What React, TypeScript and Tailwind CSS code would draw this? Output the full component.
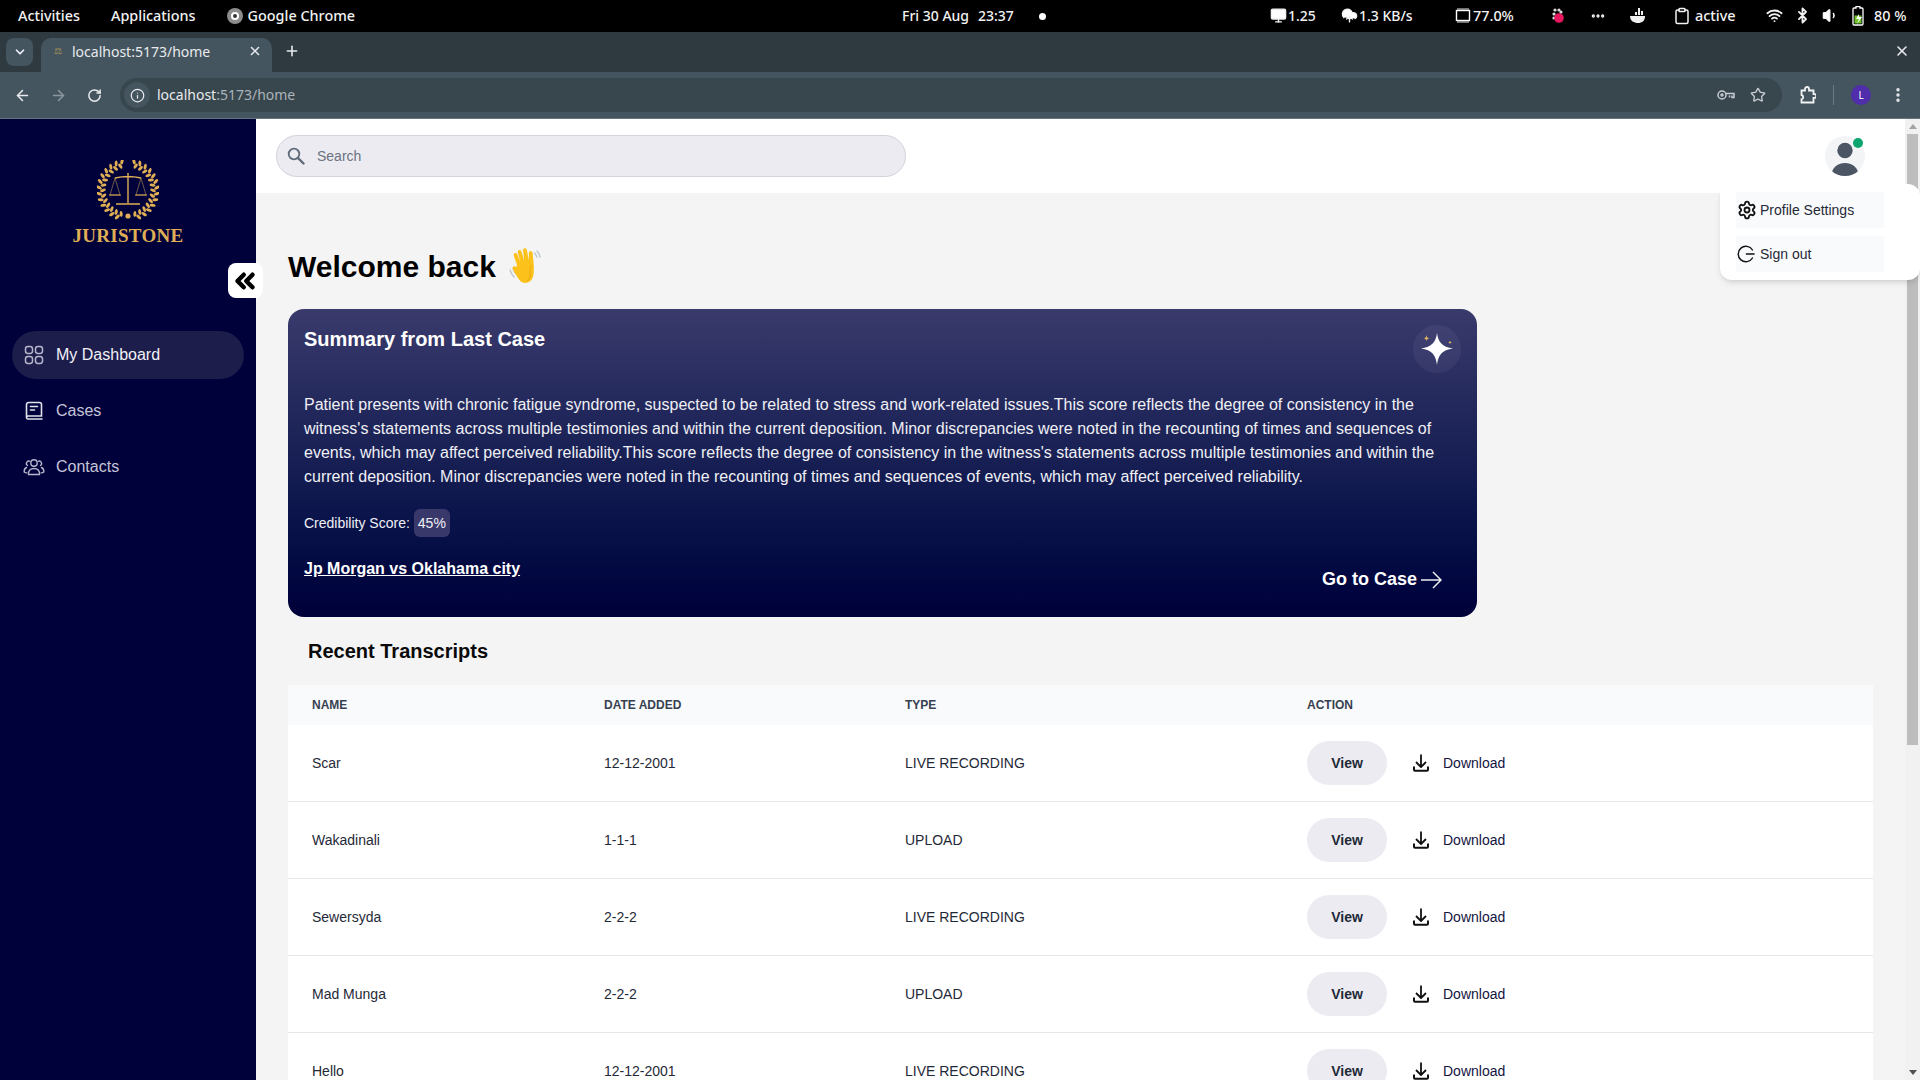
import {
  ArrowLeft, ArrowRight, Bluetooth, ChevronDown, ChevronsLeft, Ellipsis, Info, Monitor,
  MoreVertical, Plus, RotateCw, Settings, Star, Volume1, Wifi, X, CloudUpload, Clipboard,
} from "lucide-react";

const ROWS = [
  { name: "Scar", date: "12-12-2001", type: "LIVE RECORDING" },
  { name: "Wakadinali", date: "1-1-1", type: "UPLOAD" },
  { name: "Sewersyda", date: "2-2-2", type: "LIVE RECORDING" },
  { name: "Mad Munga", date: "2-2-2", type: "UPLOAD" },
  { name: "Hello", date: "12-12-2001", type: "LIVE RECORDING" },
];

const SUMMARY =
  "Patient presents with chronic fatigue syndrome, suspected to be related to stress and work-related issues.This score reflects the degree of consistency in the witness's statements across multiple testimonies and within the current deposition. Minor discrepancies were noted in the recounting of times and sequences of events, which may affect perceived reliability.This score reflects the degree of consistency in the witness's statements across multiple testimonies and within the current deposition. Minor discrepancies were noted in the recounting of times and sequences of events, which may affect perceived reliability.";

function Wreath() {
  const leaves = [];
  for (let i = 0; i < 13; i++) {
    const deg = 12 + i * 12.2;
    const rad = (deg * Math.PI) / 180;
    for (const side of [1, -1]) {
      const x = 31 + side * 25 * Math.sin(rad + 0.1);
      const y = 30 - 25 * Math.cos(rad + 0.1);
      const x2 = 31 + side * 29 * Math.sin(rad);
      const y2 = 30 - 29 * Math.cos(rad);
      leaves.push(
        <ellipse key={`${i}${side}a`} cx={x} cy={y} rx="1.5" ry="3" fill="#dfae55" transform={`rotate(${side * (deg + 25)} ${x} ${y})`} />,
        <ellipse key={`${i}${side}b`} cx={x2} cy={y2} rx="1.5" ry="3" fill="#dfae55" transform={`rotate(${side * (deg - 25)} ${x2} ${y2})`} />,
      );
    }
  }
  return (
    <svg width="62" height="60" viewBox="0 0 62 60" fill="none">
      {leaves}
      <path d="M31 13v30M19 44h24M18 18q13-3 26 0" stroke="#dfae55" strokeWidth="1.4" />
      <path d="M18 18l-5 17h10zM44 18l-5 17h10z" stroke="#dfae55" strokeWidth=".5" />
      <path d="M12 35h12M38 35h12" stroke="#dfae55" strokeWidth="1" />
      <circle cx="31" cy="56" r="2.6" fill="#dfae55" />
    </svg>
  );
}

function GridIcon() {
  return (
    <svg width="20" height="20" viewBox="0 0 20 20" fill="none" stroke="#b5b5cb" strokeWidth="1.5">
      <rect x="1.5" y="1.5" width="7" height="7" rx="2.4" />
      <rect x="11.5" y="1.5" width="7" height="7" rx="2.4" />
      <rect x="1.5" y="11.5" width="7" height="7" rx="2.4" />
      <rect x="11.5" y="11.5" width="7" height="7" rx="2.4" />
    </svg>
  );
}

function BookIcon() {
  return (
    <svg width="20" height="20" viewBox="0 0 20 20" fill="none" stroke="#e2e2ec" strokeWidth="1.6" strokeLinecap="round">
      <path d="M2.500 16V3.500a2 2 0 0 1 2-2h11a2 2 0 0 1 2 2v11.500H4.500a1.700 1.700 0 0 0-2 1.700 1.500 1.500 0 0 0 1.500 1.300h14" />
      <path d="M6.500 5.500h7M6.500 9h4" />
    </svg>
  );
}

function ContactsIcon() {
  return (
    <svg width="22" height="18" viewBox="0 0 22 18" fill="none" stroke="#b5b5cb" strokeWidth="1.4" strokeLinecap="round">
      <circle cx="11" cy="5" r="3.200" />
      <path d="M5.500 16.500c-.5-4 2-6 5.500-6s6 2 5.500 6z" />
      <path d="M6.500 3.200a2.400 2.400 0 0 0-2 4.300M15.500 3.200a2.400 2.400 0 0 1 2 4.300M3.500 9.500C1.800 10.300 1 12 1.200 14c.8.600 1.600.8 2.500.9M18.500 9.500c1.700.8 2.500 2.500 2.300 4.500-.8.600-1.600.8-2.500.9" />
    </svg>
  );
}

function SearchGlyph() {
  return (
    <svg width="18" height="18" viewBox="0 0 18 18" fill="none" stroke="#5f6b7a" strokeLinecap="round">
      <circle cx="7" cy="7" r="5.300" strokeWidth="1.800" />
      <path d="M11 11l5.500 5.500" strokeWidth="2.400" />
    </svg>
  );
}

function SignOutIcon() {
  return (
    <svg width="18" height="18" viewBox="0 0 18 18" fill="none" stroke="#111" strokeWidth="1.400" strokeLinecap="round">
      <path d="M15.500 5A7.700 7.700 0 1 0 15.500 13" />
      <path d="M9.500 9h7.500" strokeWidth="1.600" />
    </svg>
  );
}

function DownloadIcon() {
  return (
    <svg width="16" height="18" viewBox="0 0 16 18" fill="none" stroke="#111" strokeWidth="2" strokeLinejoin="round">
      <path d="M8 .5v12M3 8l5 5 5-5" strokeWidth="1.800" />
      <path d="M1 12.500v3.300a1 1 0 0 0 1 1h12a1 1 0 0 0 1-1v-3.300" />
    </svg>
  );
}

function WaveHand() {
  return (
    <svg width="36" height="36" viewBox="0 0 36 36" fill="none">
      <path d="M3 22c1 3 2 5 4 7M6 20c.6 2 1.200 3.500 2.500 5.500" stroke="#b9c4c9" strokeWidth="1.300" strokeLinecap="round" />
      <path d="M30 3c1.500 1.500 2.500 3.500 3 6M27.500 5c1 1 1.800 2.300 2.200 4" stroke="#b9c4c9" strokeWidth="1.300" strokeLinecap="round" />
      <path d="M10 17c-1.300-4-2.700-7.500-3.200-9.500-.7-2.500 2.500-3.500 3.500-1.200l3 7.500L10.800 4.500c-.6-2.700 3-3.500 3.700-.8l2.800 9.300-1.300-10.300c-.3-2.800 3.400-3.200 3.900-.5l2 10.300-.1-7.500c0-2.700 3.500-2.700 3.800 0 .6 5.500 1 9 1.200 13.500.3 6.500-.2 10-2 13-2.500 3.800-8 4.500-11.300 1.800C11.500 30.500 8 26 5.800 21c-1-2.700 2-3.800 3.500-1.800z" fill="#fcc21b" />
      <path d="M20 33c3-2 3.500-5 3-9s1-6 2-7" stroke="#e59e0b" strokeWidth=".8" fill="none" />
    </svg>
  );
}

function Sparkle() {
  return (
    <svg width="34" height="34" viewBox="0 0 34 34">
      <path d="M17 1C18.200 10 22 15 33 16.500 22 18 18.200 23 17 33 15.800 23 12 18 1 16.500 12 15 15.800 10 17 1z" fill="#fff" />
      <path d="M6.500 3c.3 2.300 1 3 3.300 3.300-2.300.3-3 1-3.300 3.300-.3-2.300-1-3-3.300-3.300C5.500 6 6.200 5.300 6.500 3z" fill="#e0b463" />
      <path d="M30 8.500c.2 1.300.6 1.700 2 2-1.400.2-1.800.6-2 2-.2-1.400-.6-1.800-2-2 1.400-.3 1.800-.7 2-2z" fill="#e0b463" />
    </svg>
  );
}

function TopBar() {
  return (
    <div className="flex h-8 shrink-0 items-center bg-black pb-[1px] text-[14.4px] font-medium text-[#f2f2f2] [font-family:'Noto_Sans',sans-serif]">
      <span className="ml-[18px]">Activities</span>
      <span className="ml-[31px]">Applications</span>
      <span className="ml-[31px] flex h-[16px] w-[16px] items-center justify-center rounded-full bg-[#8c8c8c]">
        <span className="h-[8px] w-[8px] rounded-full border-2 border-white bg-[#333]" />
      </span>
      <span className="ml-[5px]">Google Chrome</span>
      <span className="absolute left-[902px] top-[5px] text-[14px]">Fri 30 Aug</span>
      <span className="absolute left-[978px] top-[5px] text-[14px]">23:37</span>
      <span className="absolute left-[1039px] top-[13px] h-[7px] w-[7px] rounded-full bg-white" />
      <div className="absolute left-[1270px] top-[5px] flex items-center gap-px text-[14px]"><Monitor size={17} fill="#fff" />1.25</div>
      <div className="absolute left-[1341px] top-[5px] flex items-center gap-px text-[14px]"><CloudUpload size={17} fill="#fff" />1.3 KB/s</div>
      <div className="absolute left-[1454px] top-[5px] flex items-center gap-px text-[14.4px]">
        <svg width="18" height="18" viewBox="0 0 18 18" fill="none" stroke="#fff">
          <rect x="2.500" y="3.500" width="13" height="10" strokeWidth="1.400" />
          <path d="M4 1v2M6 1v2M8 1v2M10 1v2M12 1v2M14 1v2M4 14v2M6 14v2M8 14v2M10 14v2M12 14v2M14 14v2" strokeWidth=".9" />
        </svg>
        77.0%
      </div>
      <svg width="14" height="18" viewBox="0 0 14 18" className="absolute left-[1551px] top-[7px]">
        <circle cx="4" cy="3" r="1.600" fill="#ddd" />
        <circle cx="8" cy="3" r="1.600" fill="#ddd" />
        <circle cx="3" cy="7" r="1.600" fill="#ddd" />
        <circle cx="3" cy="11" r="1.600" fill="#ddd" />
        <circle cx="8" cy="11" r="4.800" fill="#e6175f" />
        <circle cx="10" cy="5" r="1.600" fill="#ddd" />
      </svg>
      <Ellipsis size={16} className="absolute left-[1590px] top-[8px]" strokeWidth={3} />
      <svg width="18" height="18" viewBox="0 0 18 18" fill="#eee" className="absolute left-[1629px] top-[7px]">
        <path d="M1 9h15c0 5-3 7-7 7s-8-2-8-7z" />
        <path d="M6 8V5h2v3zM9 8V1h2v7zM12 8V4h2v4z" />
      </svg>
      <div className="absolute left-[1673px] top-[5px] flex items-center gap-[4px] text-[14.4px]"><Clipboard size={18} />active</div>
      <Wifi size={17} className="absolute left-[1766px] top-[7px]" strokeWidth={2.6} />
      <Bluetooth size={17} className="absolute left-[1794px] top-[7px]" strokeWidth={2.6} />
      <Volume1 size={17} className="absolute left-[1822px] top-[7px]" fill="#fff" />
      <svg width="12" height="20" viewBox="0 0 12 20" className="absolute left-[1852px] top-[6px]">
        <path d="M4 .5h4V2h2a1 1 0 0 1 1 1v15a1 1 0 0 1-1 1H2a1 1 0 0 1-1-1V3a1 1 0 0 1 1-1h2z" fill="none" stroke="#fff" strokeWidth="1.300" />
        <path d="M2.500 9.500h7v8h-7z" fill="#6fc42a" />
        <path d="M7 8l-3 5h3l-2 5 5-7H7z" fill="#fff" />
      </svg>
      <span className="absolute left-[1874px] top-[5px] text-[14.4px]">80 %</span>
    </div>
  );
}

function ChromeBars() {
  return (
    <div className="shrink-0 [font-family:'Noto_Sans',sans-serif]">
      <div className="flex h-10 items-end bg-[#2f3a40]">
        <span className="mb-[6px] ml-[6px] flex h-[28px] w-[27px] items-center justify-center rounded-lg bg-[#44555f] text-[#eef]">
          <ChevronDown size={14} strokeWidth={3} />
        </span>
        <div className="ml-[8px] flex h-[34px] w-[231px] items-center rounded-t-[10px] bg-[#44555f] pb-[8px] pl-[9px] pr-[10px] text-[14px] text-[#e8eaed]">
          <span className="flex h-[16px] w-[16px] items-center justify-center text-[9px] text-[#b5985a]">⚖</span>
          <span className="ml-[6px] flex-1">localhost:5173/home</span>
          <X size={14} strokeWidth={2.6} />
        </div>
        <Plus size={16} strokeWidth={2.4} className="mb-[13px] ml-[12px] text-[#e8eaed]" />
        <X size={16} strokeWidth={2.4} className="mb-[13px] ml-auto mr-[10px] text-[#e8eaed]" />
      </div>
      <div className="flex h-[47px] items-center border-b border-[#65757e] bg-[#44555f] text-[#e8eaed]">
        <ArrowLeft size={17} className="ml-[14px]" strokeWidth={2.2} />
        <ArrowRight size={17} className="ml-[19px] text-[#8b979e]" strokeWidth={2.2} />
        <RotateCw size={15} className="ml-[20px]" strokeWidth={2.4} />
        <div className="ml-[18px] flex h-[34px] w-[1662px] items-center rounded-full bg-[#38464e] text-[14px]">
          <span className="ml-[4px] flex h-[26px] w-[26px] items-center justify-center rounded-full bg-[#44555f]">
            <Info size={15} />
          </span>
          <span className="ml-[7px] pb-[2px]">localhost</span>
          <span className="pb-[2px] text-[#aab4ba]">:5173/home</span>
          <svg width="18" height="12" viewBox="0 0 18 12" fill="none" stroke="#c7cdd1" strokeWidth="1.500" className="ml-auto">
            <circle cx="5" cy="6" r="4" />
            <circle cx="5" cy="6" r="1" />
            <path d="M9 4.500h8v4h-2v-2M12.500 6.500v2" />
          </svg>
          <Star size={16} className="ml-[15px] mr-[16px] text-[#c7cdd1]" />
        </div>
        <svg width="16" height="18" viewBox="0 0 16 18" fill="none" stroke="#f1f3f4" strokeWidth="1.800" className="ml-[18px]">
          <path d="M1.500 4.500h3.500V3a2 2 0 0 1 4 0v1.500h4.500v3.700h1a1.800 1.800 0 0 1 0 3.600h-1v4.700h-12v-3.200a2.200 2.200 0 0 0 0-4.300z" />
        </svg>
        <span className="ml-[17px] h-[20px] w-px bg-[#6b7a83]" />
        <span className="ml-[17px] flex h-[20px] w-[20px] items-center justify-center rounded-full bg-[#4f2dab] text-[10px] text-white">L</span>
        <MoreVertical size={18} className="ml-[18px]" strokeWidth={2.6} />
      </div>
    </div>
  );
}

function Sidebar() {
  return (
    <aside className="relative flex w-[256px] shrink-0 flex-col bg-[#00003a]">
      <div className="mt-[41px] flex flex-col items-center">
        <Wreath />
        <span className="mt-[4px] text-[19px] font-bold leading-[24px] tracking-[.3px] text-[#dfae55] [font-family:'Liberation_Serif',serif]">JURISTONE</span>
      </div>
      <button className="absolute left-[228px] top-[144px] z-10 flex h-[35px] w-[35px] items-center justify-center rounded-lg bg-white text-black">
        <ChevronsLeft size={30} strokeWidth={3.6} className="-ml-[2px]" />
      </button>
      <nav className="mt-[83px] flex flex-col gap-2 px-3 text-[16px]">
        <div className="flex h-12 items-center rounded-full bg-[#1d1d4c] pl-[12px] text-[#f1f1f6]">
          <GridIcon /><span className="ml-[12px]">My Dashboard</span>
        </div>
        <div className="flex h-12 items-center pl-[12px] text-[#c5c5d8]">
          <BookIcon /><span className="ml-[12px]">Cases</span>
        </div>
        <div className="flex h-12 items-center pl-[11px] text-[#c5c5d8]">
          <ContactsIcon /><span className="ml-[11px]">Contacts</span>
        </div>
      </nav>
    </aside>
  );
}

function SummaryCard() {
  return (
    <section className="relative mt-[25px] h-[308px] w-[1189px] rounded-2xl bg-gradient-to-b from-[#3a3a6c] to-[#00003a] px-4 pt-[16px] text-white">
      <h2 className="text-[20px] font-bold leading-[28px]">Summary from Last Case</h2>
      <span className="absolute right-[16px] top-[16px] flex h-12 w-12 items-center justify-center rounded-full bg-white/5">
        <Sparkle />
      </span>
      <p className="mt-[40px] text-[16px] leading-[24px] text-[#f0f0f5]">{SUMMARY}</p>
      <div className="mt-[20px] flex items-center text-[14px] text-[#f0f0f5]">
        Credibility Score:
        <span className="ml-[4px] flex h-[28px] w-[36px] items-center justify-center rounded-md bg-[#38386a]">45%</span>
      </div>
      <a className="mt-[20px] block text-[16px] font-bold leading-[24px] underline">Jp Morgan vs Oklahama city</a>
      <div className="absolute bottom-[24px] right-[35px] flex items-center text-[18px] font-bold">
        Go to Case
        <svg width="21" height="18" viewBox="0 0 21 18" fill="none" stroke="#eee" strokeWidth="1.500" className="ml-[4px]">
          <path d="M0 9h20M12 1l8 8-8 8" />
        </svg>
      </div>
    </section>
  );
}

function Transcripts() {
  return (
    <>
      <h2 className="ml-[20px] mt-[20px] text-[20px] font-bold leading-[28px] text-[#0a0a0a]">Recent Transcripts</h2>
      <table className="mt-[20px] w-[1585px] table-fixed bg-white text-left text-[14px] text-[#1f2937]">
        <thead className="bg-[#f9fafb] text-[12px] font-bold text-[#374151]">
          <tr className="h-[40px]">
            <th className="w-[316px] pl-[24px]">NAME</th>
            <th className="w-[301px]">DATE ADDED</th>
            <th className="w-[402px]">TYPE</th>
            <th>ACTION</th>
          </tr>
        </thead>
        <tbody>
          {ROWS.map((r) => (
            <tr key={r.name} className="h-[77px] border-b border-[#e5e7eb] first:h-[76px]">
              <td className="pl-[24px] pt-[2px]">{r.name}</td>
              <td className="pt-[2px]">{r.date}</td>
              <td className="pt-[2px]">{r.type}</td>
              <td className="pt-[1px]">
                <div className="flex items-center">
                  <button className="h-[44px] w-[80px] rounded-[22px] bg-[#ebebf1] font-bold text-[#1f2937]">View</button>
                  <span className="ml-[26px]"><DownloadIcon /></span>
                  <span className="ml-[14px] text-[#14143f]">Download</span>
                </div>
              </td>
            </tr>
          ))}
        </tbody>
      </table>
    </>
  );
}

export default function App() {
  return (
    <div className="relative flex h-screen flex-col overflow-hidden bg-white [font-family:'Liberation_Sans',sans-serif]">
      <TopBar />
      <ChromeBars />
      <div className="flex min-h-0 flex-1">
        <Sidebar />
        <main className="relative flex min-w-0 flex-1 flex-col bg-[#f4f4f4]">
          <header className="flex h-[74px] shrink-0 items-center bg-white pl-[20px]">
            <div className="flex h-[42px] w-[630px] items-center rounded-full border border-[#d1d5db] bg-[#ebebf1] pl-[10px] text-[14px] text-[#6b7280]">
              <SearchGlyph />
              <span className="ml-[12px]">Search</span>
            </div>
            <div className="relative ml-[919px] flex h-10 w-10 items-end justify-center overflow-hidden rounded-full bg-[#f3f4f6]">
              <svg width="40" height="40" viewBox="0 0 40 40" fill="#4b5563">
                <circle cx="20" cy="14.500" r="7.700" />
                <path d="M6 40c1-8 6-13 14-13s13 5 14 13z" />
              </svg>
            </div>
            <span className="absolute left-[1597px] top-[19px] h-[10px] w-[10px] rounded-full bg-[#0ba56f]" />
          </header>
          <div className="relative min-h-0 flex-1 pl-[32px] pt-[55px]">
            <h1 className="flex h-[36px] items-center text-[30px] font-bold text-black">
              Welcome back
              <span className="ml-[11px]"><WaveHand /></span>
            </h1>
            <SummaryCard />
            <Transcripts />
          </div>
          <div className="absolute left-[1464px] top-[65px] z-30 flex h-[96px] w-[200px] flex-col gap-2 rounded-xl bg-white px-4 py-2 text-[14px] text-[#1f2937] shadow-md">
            <div className="flex h-9 w-[148px] items-center bg-[#f9fafb] pl-[1px]">
              <Settings size={20} strokeWidth={2.2} className="text-[#111]" />
              <span className="ml-[3px]">Profile Settings</span>
            </div>
            <div className="flex h-9 w-[148px] items-center bg-[#f9fafb] pl-[1px]">
              <SignOutIcon />
              <span className="ml-[5px]">Sign out</span>
            </div>
          </div>
        </main>
        <div className="flex w-[15px] shrink-0 flex-col items-center bg-[#f1f1f1]">
          <span className="mt-[5px] h-0 w-0 border-x-[4px] border-b-[5px] border-x-transparent border-b-[#a3a3a3]" />
          <span className="mt-[5px] h-[611px] w-[11px] bg-[#bdbdbd]" />
          <span className="mb-[5px] mt-auto h-0 w-0 border-x-[4px] border-t-[5px] border-x-transparent border-t-[#505050]" />
        </div>
      </div>
    </div>
  );
}
